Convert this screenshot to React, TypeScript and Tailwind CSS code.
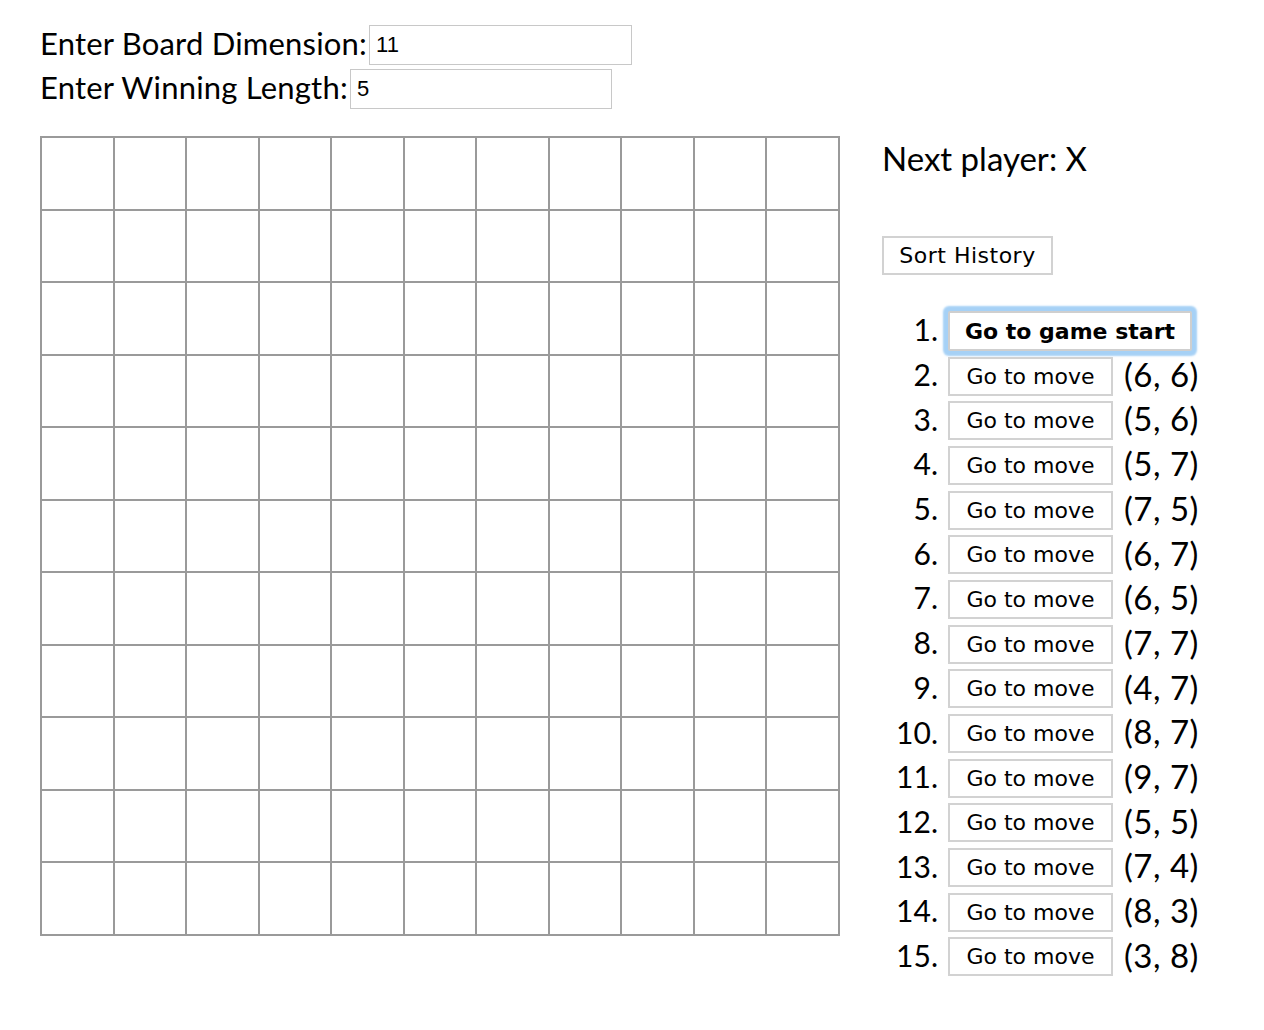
import React from 'react';

const moves: [number, number][] = [
  [6, 6], [5, 6], [5, 7], [7, 5], [6, 7], [6, 5], [7, 7],
  [4, 7], [8, 7], [9, 7], [5, 5], [7, 4], [8, 3], [3, 8],
];

const Board = () => (
  <div className="grid grid-cols-11 grid-rows-11 gap-[2px] bg-[#9a9a9a] p-[2px] w-[800px] h-[800px] shrink-0">
    {Array.from({ length: 121 }).map((_, i) => (
      <button key={i} className="bg-white" />
    ))}
  </div>
);

export default function App() {
  return (
    <div className="min-h-screen bg-white text-black pl-10 pt-[23px] font-['Lato',sans-serif]">
      <div className="flex items-center h-[44px]">
        <label className="text-[31px] tracking-[0.2px] leading-none -mt-[4px]">Enter Board Dimension:</label>
        <input
          defaultValue="11"
          className="ml-[2px] w-[263px] h-[40px] border-[1.5px] border-[#c8c8c8] px-[6px] text-[22px] font-['Liberation_Sans',sans-serif] outline-none"
        />
      </div>
      <div className="flex items-center h-[44px]">
        <label className="text-[31px] tracking-[0.2px] leading-none -mt-[4px]">Enter Winning Length:</label>
        <input
          defaultValue="5"
          className="ml-[2px] w-[262px] h-[40px] border-[1.5px] border-[#c8c8c8] px-[6px] text-[22px] font-['Liberation_Sans',sans-serif] outline-none"
        />
      </div>

      <div className="flex gap-[42px] mt-[25px]">
        <Board />

        <div className="flex flex-col">
          <div className="text-[33px] leading-[40px] mt-[2px]">Next player: X</div>

          <div className="mt-[58px]">
            <button className="h-[39px] w-[171px] border-2 border-[#d2d2d2] bg-white text-[22px] tracking-[0.5px] font-['DejaVu_Sans',sans-serif]">
              Sort History
            </button>
          </div>

          <ol className="mt-[34px]">
            <li className="flex items-center h-[44.7px]">
              <span className="w-[56px] text-right text-[30px] -mt-[3px]">1.</span>
              <button className="ml-[10px] h-[40px] w-[244px] border-2 border-[#cfcfcf] bg-white rounded-[2px] text-[22px] font-bold font-['DejaVu_Sans',sans-serif] shadow-[0_0_2px_5px_#a6d1f6]">
                Go to game start
              </button>
            </li>
            {moves.map(([x, y], i) => (
              <li key={i} className="flex items-center h-[44.7px]">
                <span className="w-[56px] text-right text-[30px] -mt-[3px]">{i + 2}.</span>
                <button className="ml-[10px] h-[39px] w-[165px] border-2 border-[#d2d2d2] bg-white text-[22px] font-['DejaVu_Sans',sans-serif]">
                  Go to move
                </button>
                <span className="ml-[11px] text-[33px] tracking-[0.5px] -mt-[3px]">({x}, {y})</span>
              </li>
            ))}
          </ol>
        </div>
      </div>
    </div>
  );
}
